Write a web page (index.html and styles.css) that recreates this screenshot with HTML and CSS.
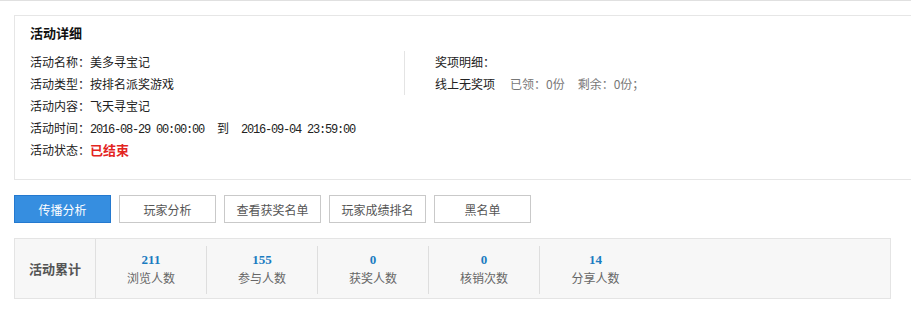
FILE: index.html
```html
<!DOCTYPE html>
<html lang="zh-CN">
<head>
    <meta charset="UTF-8">
    <title>活动详细</title>
    <link rel="stylesheet" href="styles.css">
</head>
<body>
    <div class="topbar"></div>

    <div class="page">
        <div class="detail">
            <h3 class="detail-title">活动详细</h3>
            <div class="detail-body">
                <div class="detail-left">
                    <p class="row">活动名称：美多寻宝记</p>
                    <p class="row">活动类型：按排名派奖游戏</p>
                    <p class="row">活动内容：飞天寻宝记</p>
                    <p class="row">活动时间：<span class="mono">2016-08-29 00:00:00</span><span class="to">到</span><span class="mono">2016-09-04 23:59:00</span></p>
                    <p class="row">活动状态：<span class="status">已结束</span></p>
                </div>
                <div class="detail-right">
                    <p class="row">奖项明细：</p>
                    <p class="row">线上无奖项<span class="muted first">已领：0份</span><span class="muted">剩余：0份；</span></p>
                </div>
            </div>
        </div>

        <div class="tabs">
            <button class="tab active">传播分析</button>
            <button class="tab">玩家分析</button>
            <button class="tab">查看获奖名单</button>
            <button class="tab">玩家成绩排名</button>
            <button class="tab">黑名单</button>
        </div>

        <div class="stats">
            <div class="stats-label">活动累计</div>
            <div class="stat">
                <div class="stat-num">211</div>
                <div class="stat-name">浏览人数</div>
            </div>
            <div class="stat">
                <div class="stat-num">155</div>
                <div class="stat-name">参与人数</div>
            </div>
            <div class="stat">
                <div class="stat-num">0</div>
                <div class="stat-name">获奖人数</div>
            </div>
            <div class="stat">
                <div class="stat-num">0</div>
                <div class="stat-name">核销次数</div>
            </div>
            <div class="stat last">
                <div class="stat-num">14</div>
                <div class="stat-name">分享人数</div>
            </div>
        </div>
    </div>
</body>
</html>
```

FILE: styles.css
```css
* {
    margin: 0;
    padding: 0;
    box-sizing: border-box;
}

body {
    background: #fff;
    color: #222;
    font-family: "Noto Sans CJK SC", sans-serif;
    font-size: 12px;
}

.topbar {
    height: 1px;
    background: #e0e0e0;
}

.page {
    padding: 14px 0 0 14px;
}

/* 活动详细 - 右侧延伸出可视区 */
.detail {
    border: 1px solid #e6e6e6;
    border-right: none;
    padding: 6px 15px 18px;
}

.detail-title {
    font-size: 13px;
    font-weight: bold;
    line-height: 22px;
    color: #111;
    margin-bottom: 7px;
}

.detail-body {
    display: flex;
    align-items: flex-start;
}

.detail-left {
    width: 374px;
}

.detail-right {
    border-left: 1px solid #e4e4e4;
    padding-left: 30px;
}

.row {
    line-height: 22px;
    height: 22px;
    white-space: nowrap;
}

.mono {
    font-family: "Liberation Mono", monospace;
    font-size: 12px;
    letter-spacing: -1.2px;
}

.to {
    margin: 0 12px 0 13px;
}

.status {
    color: #e3251f;
    font-weight: bold;
    font-size: 13px;
}

.muted {
    color: #777;
    margin-left: 13px;
}

.muted.first {
    margin-left: 15px;
}

/* 按钮 */
.tabs {
    display: flex;
    gap: 8px;
    margin-top: 15px;
}

.tab {
    width: 97px;
    height: 28px;
    border: 1px solid #c9c9c9;
    background: #fff;
    color: #555;
    font-family: "Noto Sans CJK SC", sans-serif;
    font-size: 12px;
    cursor: pointer;
}

.tab.active {
    background: #368ee0;
    border-color: #2479cf;
    color: #fff;
}

/* 活动累计 */
.stats {
    display: flex;
    width: 877px;
    height: 61px;
    margin-top: 15px;
    background: #f7f7f7;
    border: 1px solid #e4e4e4;
}

.stats-label {
    width: 81px;
    border-right: 1px solid #e0e0e0;
    display: flex;
    align-items: center;
    justify-content: center;
    font-size: 13px;
    font-weight: bold;
    color: #555;
}

.stat {
    width: 111px;
    margin: 7px 0 4px;
    padding-top: 5px;
    border-right: 1px solid #dedede;
    text-align: center;
}

.stat.last {
    border-right: none;
}

.stat-num {
    font-family: "Liberation Serif", serif;
    font-weight: bold;
    font-size: 13px;
    line-height: 18px;
    color: #1a7cc1;
}

.stat-name {
    line-height: 18px;
    color: #666;
}
```
